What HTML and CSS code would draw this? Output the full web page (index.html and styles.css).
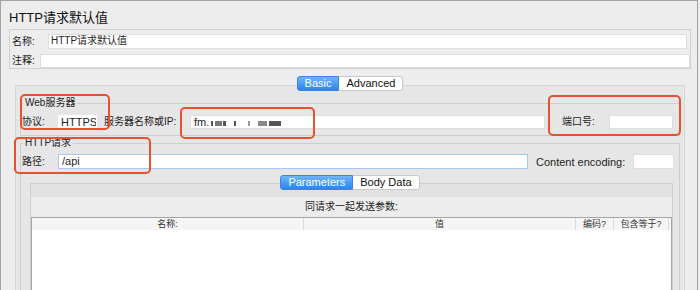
FILE: index.html
```html
<!DOCTYPE html>
<html lang="zh">
<head>
    <meta charset="UTF-8">
    <meta name="viewport" content="width=device-width, initial-scale=1.0">
    <title>HTTP请求默认值</title>
    <link rel="stylesheet" href="styles.css">
</head>
<body>

<div class="window">
    <div class="title">HTTP请求默认值</div>

    <div class="namebox">
        <div class="row row-name">
            <span class="label name-label">名称:</span>
            <div class="field">HTTP请求默认值</div>
        </div>
        <div class="row row-comment">
            <span class="label comment-label">注释:</span>
            <div class="field"></div>
        </div>
    </div>

    <div class="tabs">
        <span class="tab active">Basic</span><span class="tab last">Advanced</span>
    </div>

    <div class="panel">
        <fieldset class="group web">
            <legend>Web服务器</legend>
            <div class="row">
                <span class="label short">协议:</span>
                <div class="field proto">HTTPS</div>
                <span class="label server-label">服务器名称或IP:</span>
                <div class="field server">fm.<span class="blot b1"></span><span class="blot b2"></span><span class="blot b3"></span><span class="blot b4"></span><span class="blot b5"></span><span class="blot b6"></span><span class="blot b7"></span></div>
                <span class="label port-label">端口号:</span>
                <div class="field port"></div>
            </div>
        </fieldset>

        <fieldset class="group http">
            <legend>HTTP请求</legend>
            <div class="row">
                <span class="label short">路径:</span>
                <div class="field path">/api</div>
                <span class="label en enc-label">Content encoding:</span>
                <div class="field encoding"></div>
            </div>

            <div class="tabs sub">
                <span class="tab active">Parameters</span><span class="tab last">Body Data</span>
            </div>

            <div class="subpanel">
                <div class="params">
                    <div class="caption">同请求一起发送参数:</div>
                    <div class="table">
                        <div class="thead">
                            <span>名称:</span>
                            <span>值</span>
                            <span>编码?</span>
                            <span>包含等于?</span>
                            <span></span>
                        </div>
                        <div class="tbody"></div>
                    </div>
                </div>
            </div>
        </fieldset>
    </div>

    <!-- annotation boxes drawn over the screenshot -->
    <div class="mark m1"></div>
    <div class="mark m2"></div>
    <div class="mark m3"></div>
    <div class="mark m4"></div>
</div>

</body>
</html>
```

FILE: styles.css
```css
body {
    margin: 0;
    background-color: #ededed;
    font-family: "Liberation Sans", "Noto Sans CJK SC", sans-serif;
    font-size: 10px;
    color: #1e1e1e;
}
.window {
    position: relative;
    width: 698px;
    height: 290px;
    box-sizing: border-box;
    border: 1px solid #a3a3a3;
    border-bottom: none;
    overflow: hidden;
    background-color: #ededed;
}
.title {
    height: 20px;
    padding: 8px 0 0 8px;
    font-size: 13px;
    line-height: 18px;
    color: #111;
}
.row {
    display: flex;
    align-items: center;
}
.label {
    white-space: nowrap;
    line-height: 14px;
}
.en {
    font-size: 11px;
}
.field {
    box-sizing: border-box;
    height: 100%;
    background-color: #fff;
    border: 1px solid #dedede;
    padding: 0 2px;
    line-height: 12px;
    white-space: nowrap;
    overflow: hidden;
}

/* name / comment */
.namebox {
    box-sizing: border-box;
    width: 682px;
    margin-left: 8px;
    padding: 4px 0 0 2px;
    border: 1px solid #d2d2d2;
}
.row-name {
    height: 15px;
    padding-right: 3px;
}
.row-comment {
    height: 14px;
    margin-top: 5px;
}
.name-label {
    width: 36px;
}
.comment-label {
    width: 28px;
}
.namebox .field {
    flex: 1;
}

/* tabs */
.tabs {
    position: relative;
    z-index: 1;
    display: flex;
    justify-content: center;
    height: 15px;
    margin-top: 7px;
    margin-bottom: -6px;
    padding-left: 2px;
}
.tab {
    box-sizing: border-box;
    height: 15px;
    padding: 0 7px;
    font-size: 11px;
    line-height: 13px;
    background-color: #fff;
    border: 1px solid #c9c9c9;
    border-left: none;
    border-radius: 0 3px 3px 0;
    color: #111;
}
.tab.active {
    background: linear-gradient(#6db4fb, #2e83ec);
    border: 1px solid #3b84e0;
    border-radius: 3px 0 0 3px;
    color: #fff;
}

/* main panel */
.panel {
    box-sizing: border-box;
    width: 670px;
    height: 260px;
    margin-left: 14px;
    padding: 10px 4px 0;
    background-color: #e6e6e6;
    border: 1px solid #d6d6d6;
}
.group {
    margin: 0;
    border: 1px solid #cdcdcd;
    min-width: 0;
}
.group legend {
    margin-left: 1px;
    padding: 0 2px;
    font-size: 10px;
    line-height: 14px;
    color: #222;
}
.web {
    padding: 0 6px 6px 1px;
}
.web .row {
    height: 14px;
    margin-top: 5px;
}
.short {
    width: 36px;
}
.proto {
    width: 39px;
    border-color: #fff;
    font-size: 11px;
}
.server-label {
    width: 86px;
    margin-left: 7px;
}
.server {
    flex: 1;
    font-size: 11px;
    padding-left: 3px;
}
.port-label {
    width: 47px;
    margin-left: 17px;
}
.port {
    width: 64px;
}
.blot {
    display: inline-block;
    height: 5px;
    background-color: #555;
    vertical-align: 0;
}
.b1 { width: 2px; margin-left: 2px; }
.b2 { width: 7px; margin-left: 2px; background-color: #777; }
.b3 { width: 3px; margin-left: 1px; }
.b4 { width: 2px; margin-left: 8px; }
.b5 { width: 2px; margin-left: 12px; background-color: #999; }
.b6 { width: 9px; margin-left: 8px; background-color: #888; }
.b7 { width: 12px; margin-left: 2px; }

.http {
    height: 200px;
    padding: 0 5px 0 1px;
    border-bottom: none;
}
.http > .row {
    height: 15px;
    margin-top: 4px;
}
.path {
    flex: 1;
    font-size: 11px;
    border-color: #a9c8ea;
    padding-left: 3px;
}
.enc-label {
    width: 92px;
    margin-left: 8px;
}
.encoding {
    width: 41px;
    margin-left: 5px;
}
.tabs.sub {
    margin-top: 6px;
    margin-bottom: -7px;
    padding-left: 4px;
}

/* parameters */
.subpanel {
    margin: 0 1px 0 8px;
    padding-top: 13px;
    background-color: #e1e1e1;
    border: 1px solid #cfcfcf;
    height: 120px;
}
.params {
    height: 100%;
    background-color: #ececec;
}
.caption {
    height: 20px;
    line-height: 20px;
    text-align: center;
    color: #222;
}
.table {
    border: 1px solid #a6a6a6;
    border-bottom: none;
}
.thead {
    display: grid;
    grid-template-columns: 271px 272px 38px 55px 1fr;
    height: 12px;
    background-color: #f5f5f5;
    font-size: 9px;
    line-height: 12px;
    text-align: center;
    color: #333;
}
.thead span + span {
    border-left: 1px solid #dcdcdc;
}
.tbody {
    height: 80px;
    background-color: #fff;
}

/* red annotation boxes */
.mark {
    position: absolute;
    box-sizing: border-box;
    border: 2px solid #e8502f;
    border-radius: 5px;
}
.m1 { left: 19px; top: 93px; width: 90px; height: 36px; }
.m2 { left: 179px; top: 106px; width: 135px; height: 32px; }
.m3 { left: 547px; top: 94px; width: 133px; height: 41px; }
.m4 { left: 13px; top: 136px; width: 137px; height: 37px; }
```
